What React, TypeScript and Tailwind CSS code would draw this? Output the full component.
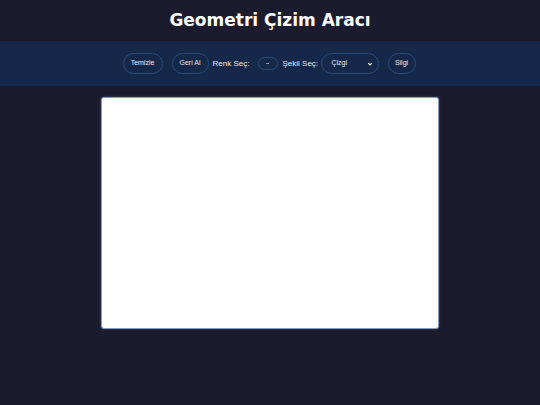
import React from "react";

export default function App() {
  return (
    <div className="w-[540px] h-[405px] bg-[#1c1b2e] flex flex-col items-center" style={{ fontFamily: '"Liberation Sans", Arial, sans-serif' }}>
      <h1 className="h-[41px] flex items-center justify-center text-white text-[17px] font-bold" style={{ fontFamily: '"DejaVu Sans", sans-serif' }}>
        Geometri Çizim Aracı
      </h1>
      <div className="w-full h-[45px] bg-[#16284a] flex items-center justify-center text-white pr-[2px]">
        <button className="w-[40px] h-[21px] rounded-full border border-[#2c4a78] bg-[#16284a] text-[#e8ecf4] text-[7px] flex items-center justify-center">Temizle</button>
        <button className="ml-[9px] w-[37px] h-[21px] rounded-full border border-[#2c4a78] bg-[#16284a] text-[#e8ecf4] text-[7px] flex items-center justify-center">Geri Al</button>
        <span className="ml-[4px] w-[36px] text-[8px] whitespace-nowrap text-[#e8ecf4]">Renk Seç:</span>
        <div className="ml-[9px] w-[20px] h-[13px] rounded-full border border-[#2c4a78] flex items-center justify-center">
          <div className="w-[3px] h-[1px] bg-[#8894a8]" />
        </div>
        <span className="ml-[5px] w-[35px] text-[8px] whitespace-nowrap text-[#e8ecf4]">Şekil Seç:</span>
        <div className="ml-[3px] w-[58px] h-[21px] rounded-full border border-[#2c4a78] flex items-center justify-between pl-[10px] pr-[5px] text-[7px] text-[#e8ecf4]">
          <span>Çizgi</span>
          <svg width="6" height="6" viewBox="0 0 10 10"><path d="M2 3.5 L5 6.5 L8 3.5" stroke="white" strokeWidth="1.8" fill="none" /></svg>
        </div>
        <button className="ml-[9px] w-[28px] h-[21px] rounded-full border border-[#2c4a78] bg-[#16284a] text-[#e8ecf4] text-[7px] flex items-center justify-center">Silgi</button>
      </div>
      <div className="mt-[11px] w-[338px] h-[232px] bg-white rounded-[3px] border border-[#7e9cc6] shadow-[0_0_2px_rgba(120,150,200,0.5)]" />
    </div>
  );
}
